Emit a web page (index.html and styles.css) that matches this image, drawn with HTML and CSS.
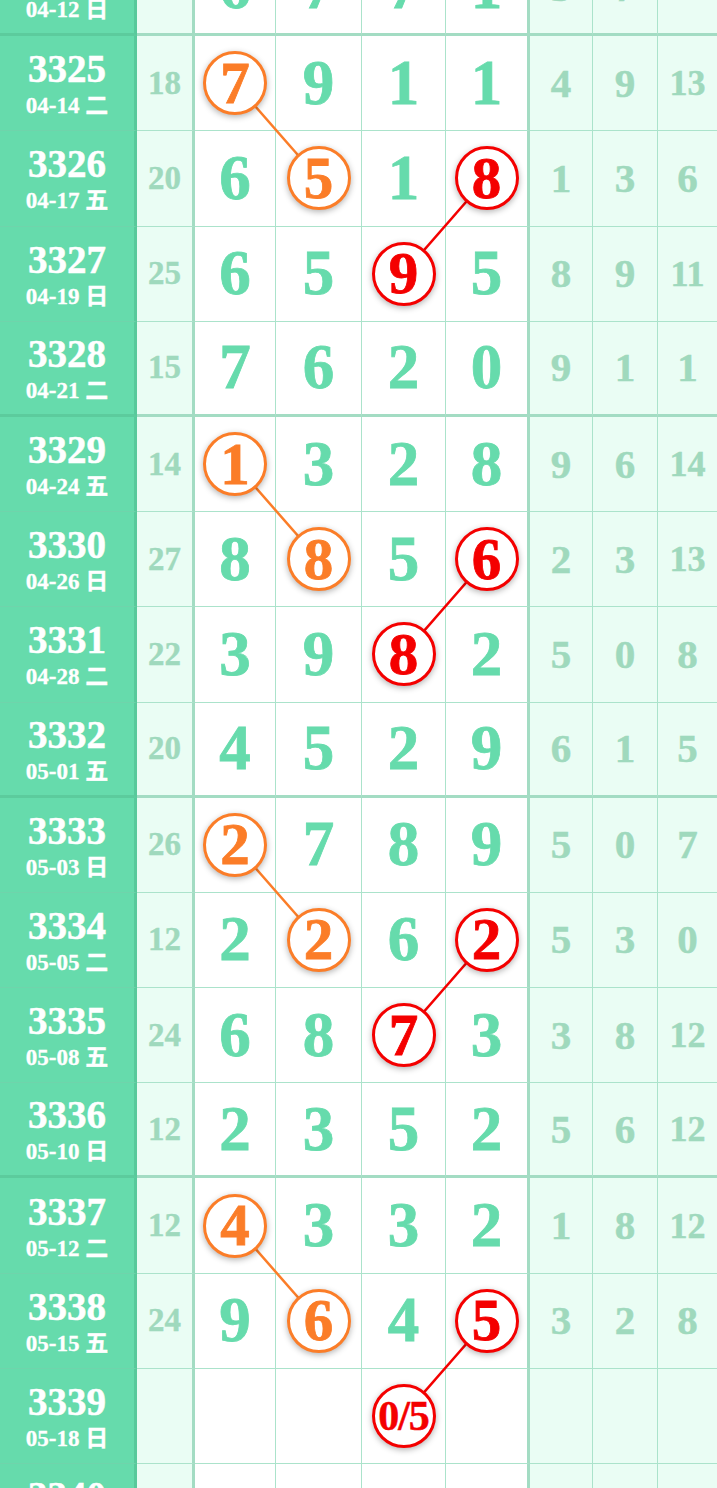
FILE: index.html
```html
<!DOCTYPE html>
<html lang="zh">
	<head>
		<meta charset="UTF-8" />
		<meta name="viewport" content="width=device-width, initial-scale=1.0" />
		<title>走势图</title>
		<link rel="stylesheet" href="styles.css">
	</head>
	<body>
		<div class="chart">
			<div class="rows"></div>
			<svg class="links"></svg>
		</div>

		<script>
			// 期号, 日期, 和值, 四位号码, 右侧三列, 标记(o 橙圈 r 红圈)
			var data = [
				["3324", "04-12 日", "21", ["6", "7", "7", "1"], ["3", "7", "12"], "...."],
				["3325", "04-14 二", "18", ["7", "9", "1", "1"], ["4", "9", "13"], "o..."],
				["3326", "04-17 五", "20", ["6", "5", "1", "8"], ["1", "3", "6"], ".o.r"],
				["3327", "04-19 日", "25", ["6", "5", "9", "5"], ["8", "9", "11"], "..r."],
				["3328", "04-21 二", "15", ["7", "6", "2", "0"], ["9", "1", "1"], "...."],
				["3329", "04-24 五", "14", ["1", "3", "2", "8"], ["9", "6", "14"], "o..."],
				["3330", "04-26 日", "27", ["8", "8", "5", "6"], ["2", "3", "13"], ".o.r"],
				["3331", "04-28 二", "22", ["3", "9", "8", "2"], ["5", "0", "8"], "..r."],
				["3332", "05-01 五", "20", ["4", "5", "2", "9"], ["6", "1", "5"], "...."],
				["3333", "05-03 日", "26", ["2", "7", "8", "9"], ["5", "0", "7"], "o..."],
				["3334", "05-05 二", "12", ["2", "2", "6", "2"], ["5", "3", "0"], ".o.r"],
				["3335", "05-08 五", "24", ["6", "8", "7", "3"], ["3", "8", "12"], "..r."],
				["3336", "05-10 日", "12", ["2", "3", "5", "2"], ["5", "6", "12"], "...."],
				["3337", "05-12 二", "12", ["4", "3", "3", "2"], ["1", "8", "12"], "o..."],
				["3338", "05-15 五", "24", ["9", "6", "4", "5"], ["3", "2", "8"], ".o.r"],
				["3339", "05-18 日", "", ["", "", "0/5", ""], ["", "", ""], "..r."],
				["3340", "05-20 二", "", ["", "", "", ""], ["", "", ""], "...."]
			];

			var box = document.querySelector(".rows");
			var svg = document.querySelector(".links");

			data.forEach(function(item, index) {
				var row = document.createElement("div");
				row.className = "row";
				// 每四期一条粗线
				if (index % 4 == 0) {
					row.className += " end";
				}

				var html = '<div class="cell c-no"><span class="no">' + item[0] + '</span><span class="date">' + item[1] + '</span></div>';
				html += '<div class="cell c-sum">' + item[2] + '</div>';

				item[3].forEach(function(num, i) {
					var mark = item[5].charAt(i);
					var cls = "cell c-d" + (i == 3 ? " c-d4" : "");
					if (mark == "o" || mark == "r") {
						var small = num.length > 1 ? " ball-sm" : "";
						html += '<div class="' + cls + '"><span class="ball ball-' + mark + small + '" data-row="' + index + '" data-mark="' + mark + '">' + num + '</span></div>';
					} else {
						html += '<div class="' + cls + '">' + num + '</div>';
					}
				});

				item[4].forEach(function(num) {
					html += '<div class="cell c-r' + (num.length > 1 ? " sm" : "") + '">' + num + '</div>';
				});

				row.innerHTML = html;
				box.appendChild(row);
			});

			// 连线: 同色圈 相邻两期 圆心连起来
			var chart = document.querySelector(".chart").getBoundingClientRect();
			var list = document.querySelectorAll(".ball");
			for (var i = 0; i < list.length; i++) {
				for (var j = 0; j < list.length; j++) {
					var a = list[i];
					var b = list[j];
					if (a.dataset.mark == b.dataset.mark && b.dataset.row - a.dataset.row == 1) {
						var ra = a.getBoundingClientRect();
						var rb = b.getBoundingClientRect();
						var line = document.createElementNS("http://www.w3.org/2000/svg", "line");
						line.setAttribute("x1", ra.left + ra.width / 2 - chart.left);
						line.setAttribute("y1", ra.top + ra.height / 2 - chart.top);
						line.setAttribute("x2", rb.left + rb.width / 2 - chart.left);
						line.setAttribute("y2", rb.top + rb.height / 2 - chart.top);
						line.setAttribute("class", a.dataset.mark == "o" ? "link-o" : "link-r");
						svg.appendChild(line);
					}
				}
			}
		</script>
	</body>
</html>
```

FILE: styles.css
```css
body {
	margin: 0;
	background: #fff;
	font-family: "Liberation Serif", "Noto Sans CJK SC", serif;
	font-weight: bold;
}
.chart {
	position: relative;
	width: 717px;
	margin-top: -59px;
	overflow: hidden;
}
.links {
	position: absolute;
	top: 0;
	left: 0;
	width: 100%;
	height: 100%;
	z-index: 1;
	pointer-events: none;
}
.link-o {
	stroke: #fb7d28;
	stroke-width: 2.5;
}
.link-r {
	stroke: #f40000;
	stroke-width: 2.5;
}
.row {
	display: grid;
	grid-template-columns: 137px 58px 81px 86px 84px 84px 63px 65px 59px;
	height: 95.2px;
}
.cell {
	box-sizing: border-box;
	display: flex;
	align-items: center;
	justify-content: center;
	border-right: 1px solid #abe3cb;
	border-bottom: 1px solid #abe3cb;
	line-height: 1;
}
.row.end .cell {
	border-bottom: 3px solid #a3dcc3;
}
.c-no {
	flex-direction: column;
	background: #66dbac;
	color: #fff;
	border-right: 3px solid #58c99b;
	border-bottom-color: #6fd4ab;
}
.row.end .c-no {
	border-bottom-color: #5ccb9d;
}
.no {
	font-size: 39px;
	-webkit-text-stroke: 0.5px #fff;
}
.date {
	font-size: 23px;
	margin-top: 6px;
	-webkit-text-stroke: 0.3px #fff;
}
.c-sum {
	background: #eafdf4;
	color: #9fd9bd;
	font-size: 33px;
	border-right: 3px solid #a3dcc3;
	-webkit-text-stroke: 0.4px #9fd9bd;
}
.c-d {
	background: #fff;
	color: #66dbac;
	font-size: 63px;
	-webkit-text-stroke: 0.8px #66dbac;
}
.c-d4 {
	border-right: 3px solid #a3dcc3;
}
.c-r {
	background: #eafdf4;
	color: #9fd9bd;
	font-size: 41px;
	-webkit-text-stroke: 0.5px #9fd9bd;
}
.c-r.sm {
	font-size: 36px;
}
.c-r:last-child {
	border-right: 0;
}
.ball {
	position: relative;
	z-index: 2;
	box-sizing: border-box;
	width: 64px;
	height: 64px;
	display: flex;
	align-items: center;
	justify-content: center;
	border-radius: 50%;
	background: #fff;
	border: 3px solid;
	font-size: 59px;
	box-shadow: 0 2px 6px rgba(0, 0, 0, 0.3);
}
.ball-o {
	color: #fb7d28;
	border-color: #fb7d28;
	-webkit-text-stroke: 0.8px #fb7d28;
}
.ball-r {
	color: #f40000;
	border-color: #f40000;
	-webkit-text-stroke: 0.8px #f40000;
}
.ball-sm {
	font-size: 42px;
	letter-spacing: -1px;
	-webkit-text-stroke: 0.5px #f40000;
}
```
